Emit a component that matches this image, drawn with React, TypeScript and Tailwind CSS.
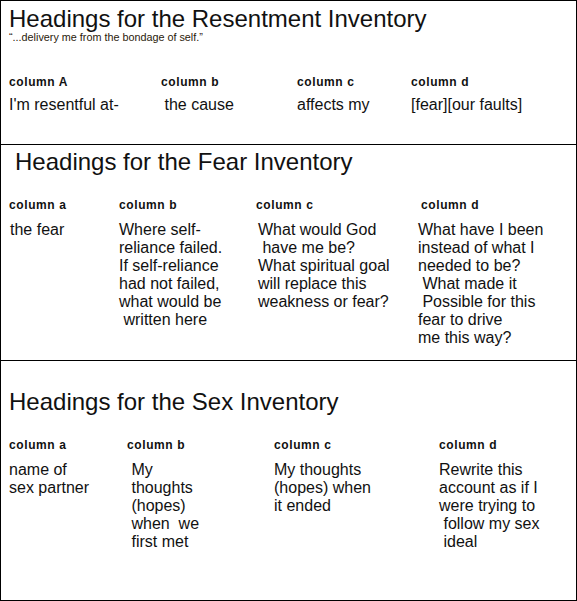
import React from 'react';

type Col = {
  head: string;
  headWidth: string;
  valueWidth: string;
  lines: string[];
};

const resentment: Col[] = [
  { head: 'column A', headWidth: 'w-[152px]', valueWidth: 'w-[151px]', lines: ["I'm resentful at-"] },
  { head: 'column b', headWidth: 'w-[136px]', valueWidth: 'w-[137px]', lines: [' the cause'] },
  { head: 'column c', headWidth: 'w-[114px]', valueWidth: 'w-[114px]', lines: ['affects my'] },
  { head: 'column d', headWidth: 'w-auto', valueWidth: 'w-auto', lines: ['[fear][our faults]'] },
];

const fear: Col[] = [
  { head: 'column a', headWidth: 'w-[110px]', valueWidth: 'w-[109px]', lines: ['the fear'] },
  { head: 'column b', headWidth: 'w-[137px]', valueWidth: 'w-[139px]', lines: ['Where self-', 'reliance failed.', 'If self-reliance', 'had not failed,', 'what would be', ' written here'] },
  { head: 'column c', headWidth: 'w-[165px]', valueWidth: 'w-[160px]', lines: ['What would God', ' have me be?', 'What spiritual goal', 'will replace this', 'weakness or fear?'] },
  { head: 'column d', headWidth: 'w-auto', valueWidth: 'w-auto', lines: ['What have I been', 'instead of what I', 'needed to be?', ' What made it', ' Possible for this', 'fear to drive', 'me this way?'] },
];

const sex: Col[] = [
  { head: 'column a', headWidth: 'w-[118px]', valueWidth: 'w-[118px]', lines: ['name of', 'sex partner'] },
  { head: 'column b', headWidth: 'w-[147px]', valueWidth: 'w-[147px]', lines: [' My', ' thoughts', ' (hopes)', ' when  we', ' first met'] },
  { head: 'column c', headWidth: 'w-[165px]', valueWidth: 'w-[165px]', lines: ['My thoughts', '(hopes) when', 'it ended'] },
  { head: 'column d', headWidth: 'w-auto', valueWidth: 'w-auto', lines: ['Rewrite this', 'account as if I', 'were trying to', ' follow my sex', ' ideal'] },
];

const Columns: React.FC<{ cols: Col[]; valueGap: string; valueIndent: string }> = ({
  cols,
  valueGap,
  valueIndent,
}) => (
  <>
    <div className="flex pl-[8px]">
      {cols.map((c) => (
        <div key={c.head} className={`${c.headWidth} shrink-0 text-[12px] leading-[13px] font-bold tracking-[0.6px]`}>
          {c.head}
        </div>
      ))}
    </div>
    <div className={`flex ${valueGap} ${valueIndent}`}>
      {cols.map((c) => (
        <div key={c.head} className={`${c.valueWidth} shrink-0 text-[16px] leading-[18px]`}>
          {c.lines.map((l, i) => (
            <div key={i} className="whitespace-pre">
              {l}
            </div>
          ))}
        </div>
      ))}
    </div>
  </>
);

export default function App() {
  return (
    <div
      className="w-[577px] h-[601px] border border-black bg-white text-[#111] flex flex-col"
      style={{ fontFamily: '"Liberation Sans", Arial, sans-serif' }}
    >
      {/* resentment */}
      <section className="h-[143px] shrink-0 pt-[4px]">
        <h1 className="pl-[8px] text-[24px] leading-[28px]">Headings for the Resentment Inventory</h1>
        <p className="pl-[8px] -mt-[2px] text-[10.8px] leading-[12px] text-[#2a1a0a]">
          “...delivery me from the bondage of self.”
        </p>
        <div className="mt-[33px]">
          <Columns cols={resentment} valueGap="mt-[7px]" valueIndent="pl-[8px]" />
        </div>
      </section>

      {/* fear */}
      <section className="h-[216px] shrink-0 border-t border-black pt-[3px]">
        <h1 className="pl-[14px] text-[24px] leading-[28px]">Headings for the Fear Inventory</h1>
        <div className="mt-[23px]">
          <Columns cols={fear} valueGap="mt-[9px]" valueIndent="pl-[9px]" />
        </div>
      </section>

      {/* sex */}
      <section className="flex-1 border-t border-black pt-[27px]">
        <h1 className="pl-[8px] text-[24px] leading-[28px]">Headings for the Sex Inventory</h1>
        <div className="mt-[23px]">
          <Columns cols={sex} valueGap="mt-[9px]" valueIndent="pl-[8px]" />
        </div>
      </section>
    </div>
  );
}
